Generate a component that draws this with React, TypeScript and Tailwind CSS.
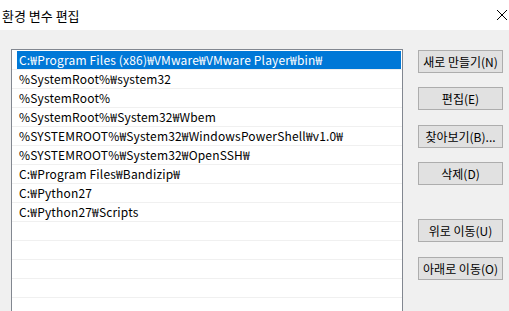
import React from "react";

const rows = [
  "C:₩Program Files (x86)₩VMware₩VMware Player₩bin₩",
  "%SystemRoot%₩system32",
  "%SystemRoot%",
  "%SystemRoot%₩System32₩Wbem",
  "%SYSTEMROOT%₩System32₩WindowsPowerShell₩v1.0₩",
  "%SYSTEMROOT%₩System32₩OpenSSH₩",
  "C:₩Program Files₩Bandizip₩",
  "C:₩Python27",
  "C:₩Python27₩Scripts",
  "",
  "",
  "",
  "",
  "",
];

function Btn({ label, className = "" }: { label: string; className?: string }) {
  return (
    <div
      className={`w-[85px] h-[23px] shrink-0 border border-[#adadad] bg-[#e1e1e1] flex items-center justify-center text-[12px] text-black leading-none ${className}`}
    >
      {label}
    </div>
  );
}

export default function App() {
  return (
    <div
      className="w-[509px] h-[311px] overflow-hidden bg-[#f0f0f0] flex flex-col"
      style={{ fontFamily: '"Noto Sans CJK KR", "Noto Sans", sans-serif' }}
    >
      <div className="h-[30px] shrink-0 bg-white flex items-center justify-between pl-[2px] pr-[1px]">
        <span className="text-[13px] text-black leading-none">환경 변수 편집</span>
        <svg width="12" height="12" viewBox="0 0 12 12">
          <path d="M1 1 L11 11 M11 1 L1 11" stroke="#000" strokeWidth="1" />
        </svg>
      </div>
      <div className="flex flex-1 min-h-0 pl-[11px] pt-[19px]">
        <div className="w-[392px] shrink-0 border border-[#828790] bg-white pt-[1px] overflow-hidden h-[300px]">
          {rows.map((r, i) => (
            <div key={i} className="h-[19px] border-b border-[#f0f0f0] flex">
              {i === 0 ? (
                <div className="ml-[5px] mr-[1px] flex-1 bg-[#0078d7] text-white text-[12px] tracking-[0.17px] flex items-center pl-[2px] whitespace-nowrap">
                  {r}
                </div>
              ) : (
                <div className="ml-[5px] flex-1 text-black text-[12px] tracking-[0.17px] flex items-center pl-[2px] whitespace-nowrap">
                  {r}
                </div>
              )}
            </div>
          ))}
        </div>
        <div className="ml-[15px] pt-[1px] flex flex-col">
          <Btn label="새로 만들기(N)" />
          <Btn label="편집(E)" className="mt-[14px]" />
          <Btn label="찾아보기(B)..." className="mt-[15px]" />
          <Btn label="삭제(D)" className="mt-[14px]" />
          <Btn label="위로 이동(U)" className="mt-[34px]" />
          <Btn label="아래로 이동(O)" className="mt-[15px]" />
        </div>
      </div>
    </div>
  );
}
